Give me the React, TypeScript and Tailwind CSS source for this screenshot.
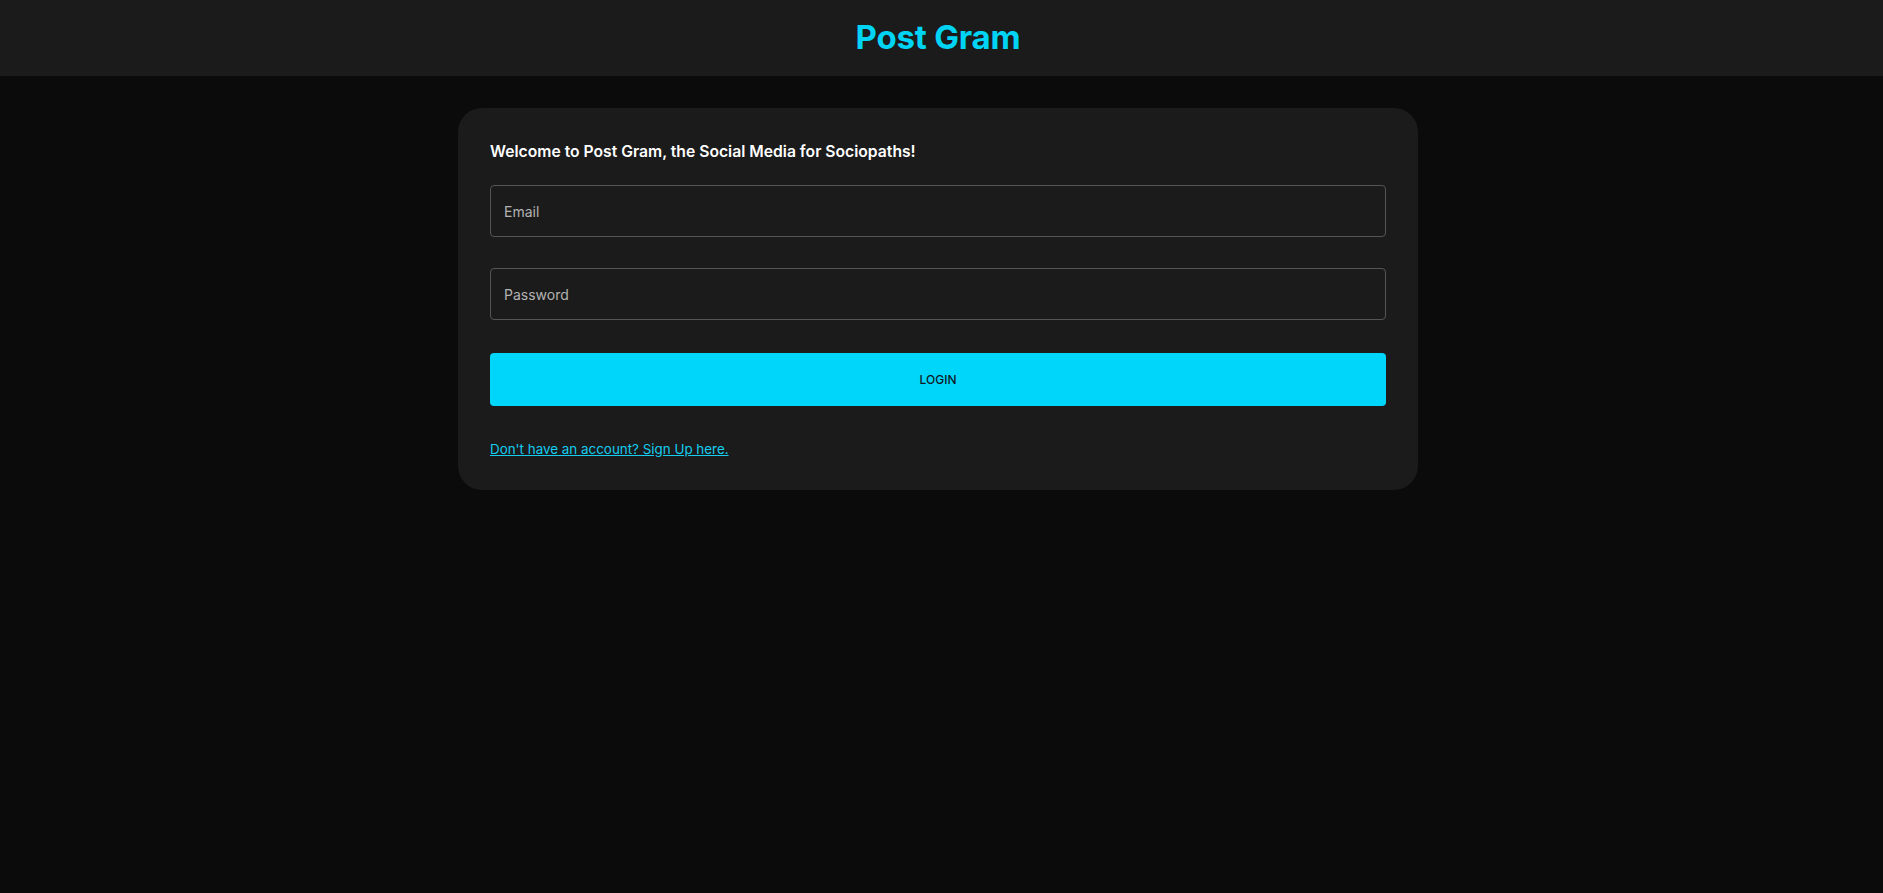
import React from 'react';

export default function App() {
  return (
    <div className="min-h-screen bg-[#0b0b0b] font-['Inter','Noto_Sans',sans-serif] text-white">
      <header className="h-[76px] bg-[#1b1b1b] flex items-center justify-center pr-[7px]">
        <h1 className="text-[33px] font-bold text-[#00d4f5] tracking-[-0.2px]">Post Gram</h1>
      </header>

      <main className="flex justify-center pt-[32px] pr-[7px]">
        <div className="w-[960px] bg-[#1b1b1b] rounded-[24px] px-8 pt-8 pb-[31px]">
          <h2 className="text-[15.7px] leading-6 font-semibold text-white mb-[21px]">
            Welcome to Post Gram, the Social Media for Sociopaths!
          </h2>
          <form className="flex flex-col" onSubmit={(e) => e.preventDefault()}>
            <input
              type="email"
              placeholder="Email"
              className="h-[52px] w-full rounded-[4px] border border-[#555] bg-[#1b1b1b] px-[13px] text-[14px] text-white placeholder:text-[#b3b3b3] outline-none"
            />
            <input
              type="password"
              placeholder="Password"
              className="mt-[31px] h-[52px] w-full rounded-[4px] border border-[#555] bg-[#1b1b1b] px-[13px] text-[14px] text-white placeholder:text-[#b3b3b3] outline-none"
            />
            <button
              type="submit"
              className="mt-[33px] h-[53px] w-full rounded-[4px] bg-[#00d6f9] text-[12px] font-medium text-[#111827] uppercase"
            >
              Login
            </button>
          </form>
          <a href="#" className="mt-[33px] block w-fit text-[13.4px] leading-5 text-[#14cdf0] underline">
            Don't have an account? Sign Up here.
          </a>
        </div>
      </main>
    </div>
  );
}
